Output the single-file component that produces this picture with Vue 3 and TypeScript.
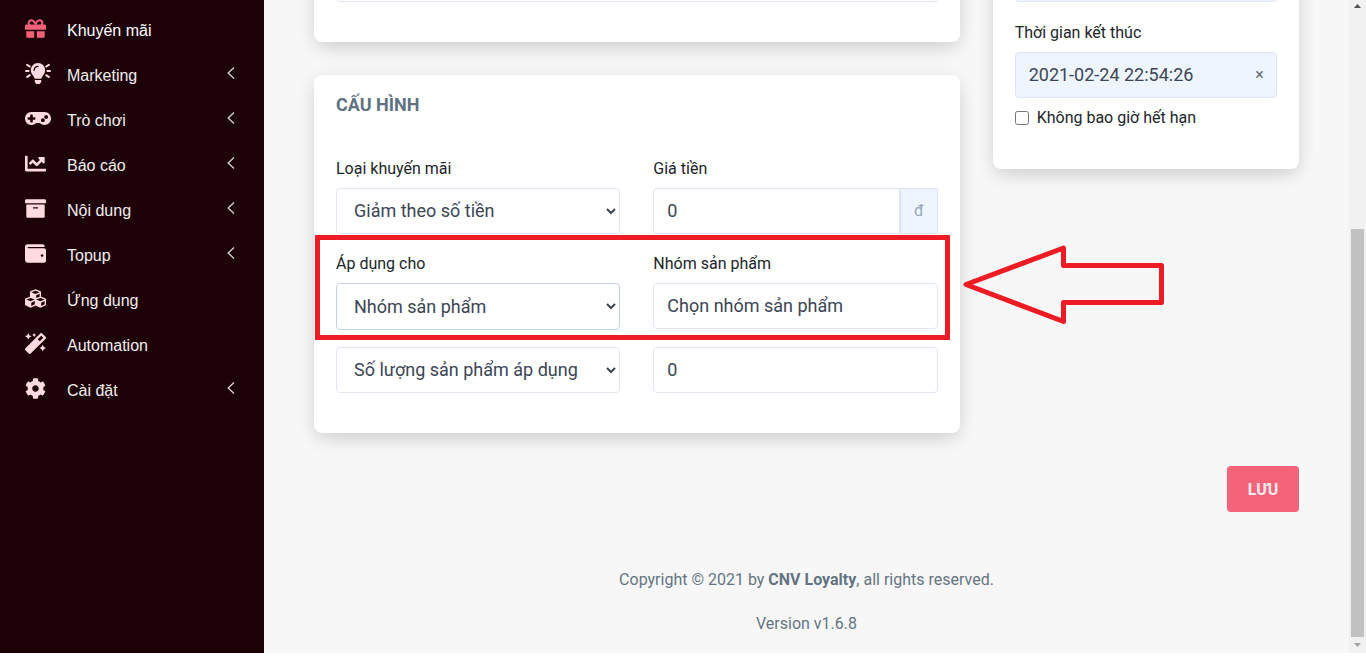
<script setup lang="ts">
import { ref } from 'vue'

interface NavItem {
  label: string
  width: number
  viewBox: string
  path: string
  active?: boolean
  expandable?: boolean
}

const items: NavItem[] = [
  {
    label: 'Khuyến mãi',
    width: 21,
    viewBox: '0 0 512 512',
    active: true,
    path: 'M32 448c0 17.7 14.3 32 32 32h160V320H32v128zm256 32h160c17.7 0 32-14.3 32-32V320H288v160zm192-320h-42.1c6.2-12.1 10.1-25.5 10.1-40 0-48.5-39.5-88-88-88-41.6 0-68.5 21.3-103 68.3-34.5-47-61.4-68.3-103-68.3-48.5 0-88 39.5-88 88 0 14.5 3.8 27.9 10.1 40H32c-17.7 0-32 14.3-32 32v80c0 8.8 7.2 16 16 16h480c8.8 0 16-7.2 16-16v-80c0-17.7-14.3-32-32-32zm-326.1 0c-22.1 0-40-17.9-40-40s17.9-40 40-40c19.9 0 34.6 3.3 86.1 80h-86.1zm206.1 0h-86.1c51.4-76.5 65.7-80 86.1-80 22.1 0 40 17.9 40 40s-17.9 40-40 40z',
  },
  {
    label: 'Marketing',
    width: 26,
    viewBox: '0 0 640 512',
    expandable: true,
    path: 'M320 0C217.700 0 144 83 144 176c0 44.400 16.500 84.900 43.600 115.800 16.600 19 42.700 58.800 52.400 92.200h160c9.700-33.400 35.800-73.200 52.400-92.200C479.500 260.900 496 220.400 496 176 496 78.800 417.200 0 320 0zm0 96c-44.100 0-80 35.900-80 80 0 8.800-7.200 16-16 16s-16-7.200-16-16c0-61.800 50.200-112 112-112 8.800 0 16 7.200 16 16s-7.200 16-16 16zM240 416h160v43c0 3.200-.9 6.200-2.700 8.900l-24.500 36.800c-3 4.500-8 7.300-13.300 7.300h-79c-5.300 0-10.300-2.800-13.300-7.300l-24.500-36.800c-1.800-2.700-2.700-5.700-2.700-8.900v-43zM24 168h64a24 24 0 0 1 0 48H24a24 24 0 0 1 0-48zM552 168h64a24 24 0 0 1 0 48h-64a24 24 0 0 1 0-48zM61 20l72 48a24 24 0 0 1-26 40L35 60a24 24 0 0 1 26-40zM579 20l-72 48a24 24 0 0 0 26 40l72-48a24 24 0 0 0-26-40zM61 364l72-48a24 24 0 0 0-26-40l-72 48a24 24 0 0 0 26 40zM579 364l-72-48a24 24 0 0 1 26-40l72 48a24 24 0 0 1-26 40z',
  },
  {
    label: 'Trò chơi',
    width: 26,
    viewBox: '0 0 640 512',
    expandable: true,
    path: 'M480 96H160C71.600 96 0 167.600 0 256s71.600 160 160 160c44.800 0 85.200-18.400 114.200-48h91.500c29 29.600 69.500 48 114.200 48 88.400 0 160-71.600 160-160S568.400 96 480 96zM256 276c0 6.600-5.400 12-12 12h-52v52c0 6.600-5.400 12-12 12h-40c-6.600 0-12-5.400-12-12v-52H76c-6.600 0-12-5.400-12-12v-40c0-6.600 5.400-12 12-12h52v-52c0-6.600 5.400-12 12-12h40c6.600 0 12 5.400 12 12v52h52c6.600 0 12 5.400 12 12v40zm184 68c-26.500 0-48-21.500-48-48s21.500-48 48-48 48 21.500 48 48-21.500 48-48 48zm80-80c-26.500 0-48-21.500-48-48s21.500-48 48-48 48 21.500 48 48-21.500 48-48 48z',
  },
  {
    label: 'Báo cáo',
    width: 21,
    viewBox: '0 0 512 512',
    expandable: true,
    path: 'M496 384H64V80c0-8.840-7.160-16-16-16H16C7.160 64 0 71.160 0 80v336c0 17.670 14.330 32 32 32h464c8.840 0 16-7.160 16-16v-32c0-8.840-7.160-16-16-16zM464 96H345.940c-21.380 0-32.090 25.850-16.970 40.970l32.400 32.400L288 242.750l-73.370-73.370c-12.500-12.500-32.760-12.500-45.250 0l-68.690 68.690c-6.250 6.250-6.250 16.380 0 22.630l22.620 22.620c6.250 6.250 16.380 6.250 22.630 0L192 237.250l73.370 73.370c12.500 12.500 32.760 12.500 45.250 0l96-96 32.400 32.400c15.120 15.120 40.970 4.410 40.970-16.970V112c.01-8.840-7.150-16-15.990-16z',
  },
  {
    label: 'Nội dung',
    width: 21,
    viewBox: '0 0 512 512',
    expandable: true,
    path: 'M32 448c0 17.700 14.300 32 32 32h384c17.700 0 32-14.300 32-32V160H32v288zm160-212c0-6.600 5.400-12 12-12h104c6.600 0 12 5.400 12 12v8c0 6.600-5.400 12-12 12H204c-6.600 0-12-5.400-12-12v-8zM480 32H32C14.300 32 0 46.300 0 64v48c0 8.800 7.200 16 16 16h480c8.800 0 16-7.200 16-16V64c0-17.700-14.300-32-32-32z',
  },
  {
    label: 'Topup',
    width: 21,
    viewBox: '0 0 512 512',
    expandable: true,
    path: 'M461.200 128H80c-8.840 0-16-7.160-16-16s7.160-16 16-16h384c8.840 0 16-7.160 16-16 0-26.510-21.490-48-48-48H64C28.650 32 0 60.650 0 96v320c0 35.350 28.650 64 64 64h397.200c28.020 0 50.800-21.530 50.800-48V176c0-26.470-22.780-48-50.800-48zM416 336c-17.670 0-32-14.330-32-32s14.330-32 32-32 32 14.330 32 32-14.330 32-32 32z',
  },
  {
    label: 'Ứng dụng',
    width: 21,
    viewBox: '0 0 512 512',
    path: 'M488.600 250.200L392 214V105.500c0-15-9.300-28.400-23.400-33.700l-100-37.500c-8.100-3.100-17.100-3.100-25.300 0l-100 37.500c-14.100 5.300-23.400 18.700-23.400 33.700V214l-96.600 36.200C9.300 255.500 0 268.900 0 283.900V394c0 13.600 7.700 26.100 19.900 32.200l100 50c10.100 5.100 22.100 5.100 32.200 0l103.900-52 103.900 52c10.100 5.100 22.100 5.100 32.200 0l100-50c12.200-6.100 19.900-18.600 19.900-32.200V283.900c0-15-9.300-28.400-23.400-33.700zM358 214.800l-85 31.900v-68.200l85-37v73.300zM154 104.100l102-38.200 102 38.200v.6l-102 41.400-102-41.400v-.6zm84 291.100l-85 42.500v-79.100l85-38.800v75.400zm0-112l-102 41.400-102-41.400v-.6l102-38.200 102 38.200v.6zm240 112l-85 42.500v-79.100l85-38.800v75.400zm0-112l-102 41.400-102-41.400v-.6l102-38.200 102 38.200v.6z',
  },
  {
    label: 'Automation',
    width: 21,
    viewBox: '0 0 512 512',
    path: 'M224 96l16-32 32-16-32-16-16-32-16 32-32 16 32 16 16 32zM80 160l26.660-53.330L160 80l-53.340-26.670L80 0 53.340 53.330 0 80l53.340 26.670L80 160zm352 128l-26.660 53.330L352 368l53.340 26.670L432 448l26.660-53.330L512 368l-53.340-26.670L432 288zm70.620-193.770L417.770 9.380C411.530 3.120 403.340 0 395.150 0c-8.190 0-16.380 3.120-22.630 9.380L9.380 372.520c-12.500 12.500-12.500 32.760 0 45.250l84.850 84.850c6.250 6.250 14.440 9.370 22.620 9.370 8.190 0 16.380-3.120 22.630-9.370l363.140-363.150c12.500-12.480 12.500-32.750 0-45.240zM359.450 203.460l-50.910-50.910 86.600-86.600 50.910 50.910-86.600 86.600z',
  },
  {
    label: 'Cài đặt',
    width: 21,
    viewBox: '0 0 512 512',
    expandable: true,
    path: 'M487.400 315.700l-42.600-24.600c4.300-23.200 4.300-47 0-70.200l42.600-24.600c4.900-2.800 7.100-8.600 5.500-14-11.100-35.600-30-67.800-54.700-94.600-3.800-4.100-10-5.100-14.800-2.300L380.800 110c-17.900-15.400-38.500-27.300-60.800-35.100V25.800c0-5.600-3.900-10.500-9.400-11.700-36.700-8.200-74.300-7.800-109.200 0-5.500 1.200-9.400 6.100-9.400 11.700V75c-22.200 7.900-42.800 19.800-60.800 35.100L88.700 85.500c-4.900-2.800-11-1.900-14.800 2.300-24.700 26.700-43.600 58.900-54.700 94.600-1.700 5.400.6 11.200 5.500 14L67.300 221c-4.300 23.200-4.300 47 0 70.200l-42.600 24.600c-4.900 2.800-7.100 8.600-5.500 14 11.100 35.600 30 67.800 54.700 94.600 3.800 4.100 10 5.100 14.800 2.300l42.600-24.600c17.900 15.400 38.500 27.300 60.800 35.100v49.200c0 5.600 3.900 10.500 9.400 11.700 36.700 8.200 74.300 7.800 109.200 0 5.500-1.200 9.400-6.100 9.400-11.700v-49.200c22.200-7.900 42.800-19.800 60.800-35.100l42.600 24.600c4.900 2.800 11 1.900 14.800-2.300 24.700-26.700 43.600-58.900 54.700-94.600 1.500-5.500-.7-11.300-5.600-14.100zM256 336c-44.100 0-80-35.900-80-80s35.900-80 80-80 80 35.900 80 80-35.900 80-80 80z',
  },
]

const promoType = ref('Giảm theo số tiền')
const applyTo = ref('Nhóm sản phẩm')
const condition = ref('Số lượng sản phẩm áp dụng')
const price = ref('0')
const quantity = ref('0')
const group = ref('')
const note = ref('')
const startTime = ref('')
const endTime = ref('2021-02-24 22:54:26')
const neverExpires = ref(false)
</script>

<template>
  <div class="page">
    <nav class="sidebar" aria-label="Menu">
      <a v-for="item in items" :key="item.label" href="#" class="nav-item" :class="{ active: item.active }">
        <span class="nav-icon">
          <svg :width="item.width" height="21" :viewBox="item.viewBox" aria-hidden="true">
            <path :d="item.path" fill="currentColor" fill-rule="evenodd" />
          </svg>
        </span>
        <span class="nav-label">{{ item.label }}</span>
        <svg v-if="item.expandable" class="chevron" width="8" height="12" viewBox="0 0 8 12" aria-hidden="true">
          <path d="M7 0.500L1.200 6L7 11.500" fill="none" stroke="currentColor" stroke-width="1.300" />
        </svg>
      </a>
    </nav>

    <main class="main">
      <div class="columns">
        <div class="column wide">
          <section class="card">
            <input v-model="note" class="control" type="text" aria-label="Ghi chú" />
          </section>

          <section class="card config">
            <h2 class="card-title">CẤU HÌNH</h2>
            <div class="fields">
              <div class="field">
                <label for="promo-type">Loại khuyến mãi</label>
                <select id="promo-type" v-model="promoType" class="control">
                  <option>Giảm theo số tiền</option>
                </select>
              </div>
              <div class="field">
                <label for="price">Giá tiền</label>
                <div class="input-group">
                  <input id="price" v-model="price" class="control" type="text" />
                  <span class="addon">đ</span>
                </div>
              </div>
              <div class="field">
                <label for="apply-to">Áp dụng cho</label>
                <select id="apply-to" v-model="applyTo" class="control focused">
                  <option>Nhóm sản phẩm</option>
                </select>
              </div>
              <div class="field">
                <label for="group">Nhóm sản phẩm</label>
                <input id="group" v-model="group" class="control" type="text" placeholder="Chọn nhóm sản phẩm" />
              </div>
              <select v-model="condition" class="control" aria-label="Điều kiện">
                <option>Số lượng sản phẩm áp dụng</option>
              </select>
              <input v-model="quantity" class="control" type="text" aria-label="Số lượng" />
            </div>
            <div class="highlight"></div>
            <svg class="pointer" width="202" height="80" viewBox="0 0 202 80" aria-hidden="true">
              <path
                d="M3 39.500L100.500 3V20.500H198.500V57.500H100.500V76.500Z"
                fill="none"
                stroke="#ed1c24"
                stroke-width="5"
                stroke-linejoin="round"
              />
            </svg>
          </section>
        </div>

        <div class="column">
          <section class="card schedule">
            <input v-model="startTime" class="control tinted" type="text" aria-label="Thời gian bắt đầu" />
            <div class="field">
              <label for="end-time">Thời gian kết thúc</label>
              <div class="date-box">
                <input id="end-time" v-model="endTime" type="text" />
                <button type="button" class="clear" aria-label="Xóa" @click="endTime = ''">×</button>
              </div>
            </div>
            <label class="check">
              <input v-model="neverExpires" type="checkbox" />
              <span>Không bao giờ hết hạn</span>
            </label>
          </section>
        </div>
      </div>

      <div class="actions">
        <button type="button" class="save">LƯU</button>
      </div>

      <footer class="footer">
        <p>Copyright © 2021 by <strong>CNV Loyalty</strong>, all rights reserved.</p>
        <p>Version v1.6.8</p>
      </footer>
    </main>

    <div class="scrollbar" aria-hidden="true">
      <svg width="17" height="17" viewBox="0 0 17 17"><path d="M5 8L8.500 4L12 8Z" fill="#505050" /></svg>
      <div class="thumb"></div>
      <svg width="17" height="16" viewBox="0 0 17 16"><path d="M5 6L8.500 10L12 6Z" fill="#a3a3a3" /></svg>
    </div>
  </div>
</template>

<style>
body {
  margin: 0;
  background: #fff;
}
</style>

<style scoped>
* {
  box-sizing: border-box;
}

.page {
  display: flex;
  overflow: hidden;
  font-family: Roboto, 'Noto Sans', sans-serif;
  font-size: 16px;
  line-height: 24px;
  color: #212529;
}

.sidebar {
  flex: 0 0 264px;
  padding: 8px 0;
  background: #1d0308;
}

.nav-item {
  display: flex;
  align-items: center;
  height: 45px;
  padding: 0 29px 0 25px;
  color: #ffdbe1;
  font-family: 'Liberation Sans', Arial, sans-serif;
  text-decoration: none;
}

.nav-icon {
  display: flex;
  flex: 0 0 42px;
  padding-bottom: 5px;
}

.nav-label {
  flex: 1;
  color: #f1eeee;
}

.active {
  color: #f46079;
}

.active .nav-label {
  color: #fff;
}

.chevron {
  margin-bottom: 5px;
  color: #d8d4d5;
}

.main {
  flex: 1;
  min-width: 0;
  padding: 0 50px;
  background: #f7f7f7;
}

.columns {
  display: grid;
  grid-template-columns: repeat(3, minmax(0, 1fr));
  gap: 33px;
  align-items: start;
  margin-top: -66px;
}

.wide {
  display: grid;
  grid-column: span 2;
  gap: 33px;
}

.card {
  padding: 22px 22px 40px;
  border-radius: 8px;
  background: #fff;
  box-shadow: 0 8px 20px -4px rgba(0, 0, 0, 0.15), 0 2px 20px rgba(0, 0, 0, 0.06);
}

.config {
  position: relative;
  padding-top: 18px;
}

.card-title {
  margin: 0 0 39px;
  color: #5f7284;
  font-size: 18px;
  font-weight: 700;
  line-height: 24px;
}

.fields {
  display: grid;
  grid-template-columns: repeat(2, minmax(0, 1fr));
  gap: 17px 33px;
  align-items: start;
}

.field {
  display: flex;
  flex-direction: column;
  gap: 7px;
  padding-top: 1px;
}

.control {
  display: block;
  width: 100%;
  height: 46px;
  padding: 0 13px 1px;
  border: 1px solid #e1e6f1;
  border-radius: 4px;
  background: #fff;
  color: #3c4555;
  font-family: inherit;
  font-size: 18px;
}

.control::placeholder {
  color: #3c4555;
  opacity: 1;
}

.focused {
  height: 47px;
  border-color: #c6d0dd;
}

.tinted {
  background: #eef5ff;
}

.input-group {
  display: flex;
}

.input-group .control {
  flex: 1;
  min-width: 0;
  border-radius: 4px 0 0 4px;
}

.addon {
  display: flex;
  align-items: center;
  justify-content: center;
  flex: 0 0 38px;
  border: 1px solid #dbe4f0;
  background: #eef5ff;
  color: #96a5be;
  font-size: 16px;
}

.highlight {
  position: absolute;
  top: 160px;
  right: 10px;
  left: 1px;
  height: 105px;
  border: 5px solid #ed1c24;
  pointer-events: none;
}

.pointer {
  position: absolute;
  top: 170px;
  left: calc(100% + 3px);
  pointer-events: none;
}

.schedule {
  display: flex;
  flex-direction: column;
  padding-bottom: 39px;
}

.schedule .field {
  margin: 18px 0 8px;
}

.date-box {
  display: flex;
  align-items: center;
  height: 46px;
  padding: 0 9px 0 13px;
  border: 1px solid #dfe6f1;
  border-radius: 4px;
  background: #eef5ff;
}

.date-box input {
  flex: 1;
  min-width: 0;
  padding: 0 0 1px;
  border: 0;
  background: none;
  color: #3c4555;
  font-family: inherit;
  font-size: 18px;
}

.clear {
  width: 15px;
  padding: 0;
  border: 0;
  background: none;
  color: #626a75;
  font-family: inherit;
  font-size: 16px;
  line-height: 24px;
}

.check {
  display: flex;
  align-items: center;
  gap: 8px;
}

.check input {
  width: 14px;
  height: 14px;
  margin: 0;
}

.actions {
  display: flex;
  justify-content: flex-end;
  margin-top: 33px;
}

.save {
  min-width: 72px;
  height: 46px;
  padding: 0 18px;
  border: 0;
  border-radius: 4px;
  background: #f3637a;
  color: #ffebee;
  font-family: inherit;
  font-size: 16px;
  font-weight: 700;
}

.footer {
  display: grid;
  gap: 20px;
  padding: 56px 0 17px;
  color: #657482;
  text-align: center;
}

.footer p {
  margin: 0;
}

.scrollbar {
  display: flex;
  flex: 0 0 17px;
  flex-direction: column;
  justify-content: space-between;
  background: #f1f1f1;
}

.thumb {
  height: 408px;
  margin: auto 2px 0;
  background: #c1c1c1;
}
</style>
